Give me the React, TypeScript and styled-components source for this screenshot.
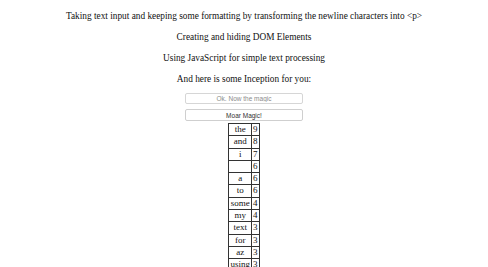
import React from 'react';
import styled, { createGlobalStyle } from 'styled-components';

const GlobalStyle = createGlobalStyle`
  html, body {
    margin: 0;
    padding: 0;
    background: #ffffff;
  }
  body {
    font-family: "Liberation Serif", "Times New Roman", serif;
    color: #111111;
  }
`;

const Page = styled.div`
  display: flex;
  flex-direction: column;
  align-items: center;
  padding-top: 10px;
  text-align: center;
`;

const Line = styled.p<{ $last?: boolean }>`
  margin: 0 0 ${p => (p.$last ? 8 : 9)}px 0;
  font-size: 9.3px;
  line-height: 12px;
`;

const Field = styled.input`
  box-sizing: border-box;
  width: 118px;
  height: 11px;
  margin: 0;
  padding: 0;
  border: 1px solid #d6d6d6;
  border-radius: 2px;
  background: #fff;
  font-family: "Liberation Sans", Arial, sans-serif;
  font-size: 6.5px;
  text-align: center;
  color: #555;

  &::placeholder {
    color: #8a8a8a;
  }
`;

const MagicButton = styled.button`
  box-sizing: border-box;
  width: 118px;
  height: 12px;
  margin: 5px 0 2px 0;
  padding: 0;
  border: 1px solid #cfcfcf;
  border-radius: 2px;
  background: #fff;
  font-family: "Liberation Sans", Arial, sans-serif;
  font-size: 6.5px;
  color: #333;
`;

const WordTable = styled.table`
  border-collapse: collapse;
  border: 1px solid #333;
  font-size: 9px;
  line-height: 11.3px;
`;

const Cell = styled.td<{ $num?: boolean }>`
  border: 1px solid #333;
  padding: 0 1px;
  text-align: ${p => (p.$num ? 'left' : 'center')};
  height: 11.3px;
`;

const counts: [string, number][] = [
  ['the', 9],
  ['and', 8],
  ['i', 7],
  ['', 6],
  ['a', 6],
  ['to', 6],
  ['some', 4],
  ['my', 4],
  ['text', 3],
  ['for', 3],
  ['az', 3],
  ['using', 3],
  ['is', 2],
];

export default function App() {
  return (
    <>
      <GlobalStyle />
      <Page>
        <Line>Taking text input and keeping some formatting by transforming the newline characters into &lt;p&gt;</Line>
        <Line>Creating and hiding DOM Elements</Line>
        <Line>Using JavaScript for simple text processing</Line>
        <Line $last>And here is some Inception for you:</Line>
        <Field placeholder="Ok. Now the magic" />
        <MagicButton>Moar Magic!</MagicButton>
        <WordTable>
          <tbody>
            {counts.map(([w, n], i) => (
              <tr key={i}>
                <Cell>{w}</Cell>
                <Cell $num>{n}</Cell>
              </tr>
            ))}
          </tbody>
        </WordTable>
      </Page>
    </>
  );
}
